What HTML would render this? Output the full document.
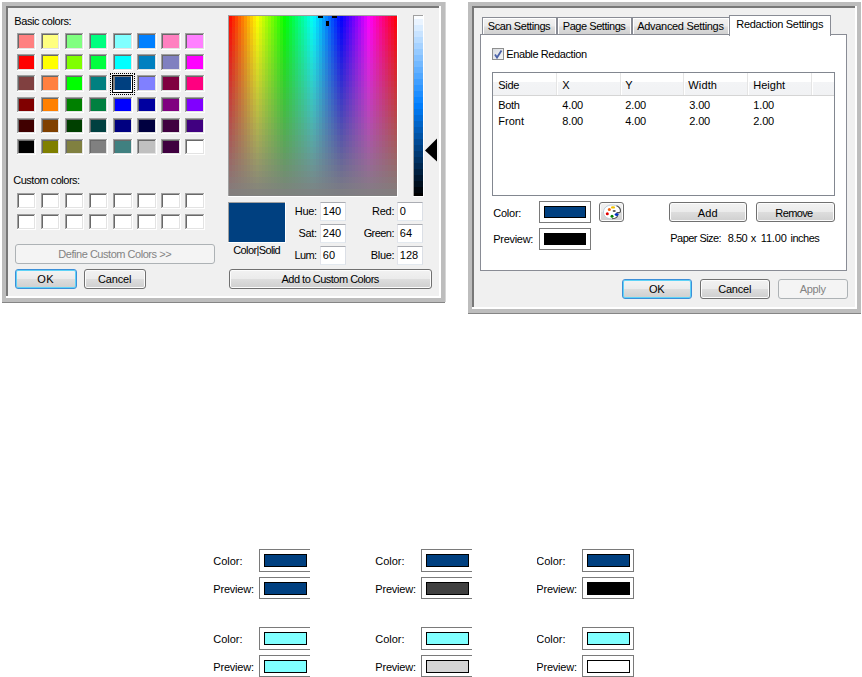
<!DOCTYPE html>
<html><head><meta charset="utf-8"><style>
html,body{margin:0;padding:0;background:#fff;}
body{width:862px;height:677px;position:relative;overflow:hidden;}
div,svg{position:absolute;}
.t{position:absolute;font-family:"Liberation Sans", sans-serif;font-size:11px;line-height:14px;white-space:pre;}
</style></head><body>
<div style='left:2px;top:2px;width:443px;height:301px;background:#bdbdbd'></div>
<div style='left:6px;top:6px;width:435px;height:292px;background:#ffffff'></div>
<div style='left:6px;top:6px;width:433px;height:290px;background:#787878'></div>
<div style='left:8px;top:8px;width:431px;height:288px;background:#f0f0f0'></div>
<div style='left:2px;top:302px;width:443px;height:1px;background:#858585'></div>
<div style='left:445px;top:2px;width:1px;height:300px;background:#d6d6d6'></div>
<div style='left:17px;top:33px;width:19px;height:17px;background:#ffffff'></div>
<div style='left:17px;top:33px;width:18px;height:16px;background:#e3e3e3'></div>
<div style='left:17px;top:33px;width:18px;height:16px;background:#a0a0a0;clip-path:polygon(0 0,100% 0,100% 1px,1px 1px,1px 100%,0 100%)'></div>
<div style='left:18px;top:34px;width:16px;height:14px;background:#696969'></div>
<div style='left:19px;top:35px;width:15px;height:13px;background:#FF8080'></div>
<div style='left:41px;top:33px;width:19px;height:17px;background:#ffffff'></div>
<div style='left:41px;top:33px;width:18px;height:16px;background:#e3e3e3'></div>
<div style='left:41px;top:33px;width:18px;height:16px;background:#a0a0a0;clip-path:polygon(0 0,100% 0,100% 1px,1px 1px,1px 100%,0 100%)'></div>
<div style='left:42px;top:34px;width:16px;height:14px;background:#696969'></div>
<div style='left:43px;top:35px;width:15px;height:13px;background:#FFFF80'></div>
<div style='left:65px;top:33px;width:19px;height:17px;background:#ffffff'></div>
<div style='left:65px;top:33px;width:18px;height:16px;background:#e3e3e3'></div>
<div style='left:65px;top:33px;width:18px;height:16px;background:#a0a0a0;clip-path:polygon(0 0,100% 0,100% 1px,1px 1px,1px 100%,0 100%)'></div>
<div style='left:66px;top:34px;width:16px;height:14px;background:#696969'></div>
<div style='left:67px;top:35px;width:15px;height:13px;background:#80FF80'></div>
<div style='left:89px;top:33px;width:19px;height:17px;background:#ffffff'></div>
<div style='left:89px;top:33px;width:18px;height:16px;background:#e3e3e3'></div>
<div style='left:89px;top:33px;width:18px;height:16px;background:#a0a0a0;clip-path:polygon(0 0,100% 0,100% 1px,1px 1px,1px 100%,0 100%)'></div>
<div style='left:90px;top:34px;width:16px;height:14px;background:#696969'></div>
<div style='left:91px;top:35px;width:15px;height:13px;background:#00FF80'></div>
<div style='left:113px;top:33px;width:20px;height:17px;background:#ffffff'></div>
<div style='left:113px;top:33px;width:19px;height:16px;background:#e3e3e3'></div>
<div style='left:113px;top:33px;width:19px;height:16px;background:#a0a0a0;clip-path:polygon(0 0,100% 0,100% 1px,1px 1px,1px 100%,0 100%)'></div>
<div style='left:114px;top:34px;width:17px;height:14px;background:#696969'></div>
<div style='left:115px;top:35px;width:16px;height:13px;background:#80FFFF'></div>
<div style='left:137px;top:33px;width:20px;height:17px;background:#ffffff'></div>
<div style='left:137px;top:33px;width:19px;height:16px;background:#e3e3e3'></div>
<div style='left:137px;top:33px;width:19px;height:16px;background:#a0a0a0;clip-path:polygon(0 0,100% 0,100% 1px,1px 1px,1px 100%,0 100%)'></div>
<div style='left:138px;top:34px;width:17px;height:14px;background:#696969'></div>
<div style='left:139px;top:35px;width:16px;height:13px;background:#0080FF'></div>
<div style='left:161px;top:33px;width:20px;height:17px;background:#ffffff'></div>
<div style='left:161px;top:33px;width:19px;height:16px;background:#e3e3e3'></div>
<div style='left:161px;top:33px;width:19px;height:16px;background:#a0a0a0;clip-path:polygon(0 0,100% 0,100% 1px,1px 1px,1px 100%,0 100%)'></div>
<div style='left:162px;top:34px;width:17px;height:14px;background:#696969'></div>
<div style='left:163px;top:35px;width:16px;height:13px;background:#FF80C0'></div>
<div style='left:185px;top:33px;width:20px;height:17px;background:#ffffff'></div>
<div style='left:185px;top:33px;width:19px;height:16px;background:#e3e3e3'></div>
<div style='left:185px;top:33px;width:19px;height:16px;background:#a0a0a0;clip-path:polygon(0 0,100% 0,100% 1px,1px 1px,1px 100%,0 100%)'></div>
<div style='left:186px;top:34px;width:17px;height:14px;background:#696969'></div>
<div style='left:187px;top:35px;width:16px;height:13px;background:#FF80FF'></div>
<div style='left:17px;top:54px;width:19px;height:17px;background:#ffffff'></div>
<div style='left:17px;top:54px;width:18px;height:16px;background:#e3e3e3'></div>
<div style='left:17px;top:54px;width:18px;height:16px;background:#a0a0a0;clip-path:polygon(0 0,100% 0,100% 1px,1px 1px,1px 100%,0 100%)'></div>
<div style='left:18px;top:55px;width:16px;height:14px;background:#696969'></div>
<div style='left:19px;top:56px;width:15px;height:13px;background:#FF0000'></div>
<div style='left:41px;top:54px;width:19px;height:17px;background:#ffffff'></div>
<div style='left:41px;top:54px;width:18px;height:16px;background:#e3e3e3'></div>
<div style='left:41px;top:54px;width:18px;height:16px;background:#a0a0a0;clip-path:polygon(0 0,100% 0,100% 1px,1px 1px,1px 100%,0 100%)'></div>
<div style='left:42px;top:55px;width:16px;height:14px;background:#696969'></div>
<div style='left:43px;top:56px;width:15px;height:13px;background:#FFFF00'></div>
<div style='left:65px;top:54px;width:19px;height:17px;background:#ffffff'></div>
<div style='left:65px;top:54px;width:18px;height:16px;background:#e3e3e3'></div>
<div style='left:65px;top:54px;width:18px;height:16px;background:#a0a0a0;clip-path:polygon(0 0,100% 0,100% 1px,1px 1px,1px 100%,0 100%)'></div>
<div style='left:66px;top:55px;width:16px;height:14px;background:#696969'></div>
<div style='left:67px;top:56px;width:15px;height:13px;background:#80FF00'></div>
<div style='left:89px;top:54px;width:19px;height:17px;background:#ffffff'></div>
<div style='left:89px;top:54px;width:18px;height:16px;background:#e3e3e3'></div>
<div style='left:89px;top:54px;width:18px;height:16px;background:#a0a0a0;clip-path:polygon(0 0,100% 0,100% 1px,1px 1px,1px 100%,0 100%)'></div>
<div style='left:90px;top:55px;width:16px;height:14px;background:#696969'></div>
<div style='left:91px;top:56px;width:15px;height:13px;background:#00FF40'></div>
<div style='left:113px;top:54px;width:20px;height:17px;background:#ffffff'></div>
<div style='left:113px;top:54px;width:19px;height:16px;background:#e3e3e3'></div>
<div style='left:113px;top:54px;width:19px;height:16px;background:#a0a0a0;clip-path:polygon(0 0,100% 0,100% 1px,1px 1px,1px 100%,0 100%)'></div>
<div style='left:114px;top:55px;width:17px;height:14px;background:#696969'></div>
<div style='left:115px;top:56px;width:16px;height:13px;background:#00FFFF'></div>
<div style='left:137px;top:54px;width:20px;height:17px;background:#ffffff'></div>
<div style='left:137px;top:54px;width:19px;height:16px;background:#e3e3e3'></div>
<div style='left:137px;top:54px;width:19px;height:16px;background:#a0a0a0;clip-path:polygon(0 0,100% 0,100% 1px,1px 1px,1px 100%,0 100%)'></div>
<div style='left:138px;top:55px;width:17px;height:14px;background:#696969'></div>
<div style='left:139px;top:56px;width:16px;height:13px;background:#0080C0'></div>
<div style='left:161px;top:54px;width:20px;height:17px;background:#ffffff'></div>
<div style='left:161px;top:54px;width:19px;height:16px;background:#e3e3e3'></div>
<div style='left:161px;top:54px;width:19px;height:16px;background:#a0a0a0;clip-path:polygon(0 0,100% 0,100% 1px,1px 1px,1px 100%,0 100%)'></div>
<div style='left:162px;top:55px;width:17px;height:14px;background:#696969'></div>
<div style='left:163px;top:56px;width:16px;height:13px;background:#8080C0'></div>
<div style='left:185px;top:54px;width:20px;height:17px;background:#ffffff'></div>
<div style='left:185px;top:54px;width:19px;height:16px;background:#e3e3e3'></div>
<div style='left:185px;top:54px;width:19px;height:16px;background:#a0a0a0;clip-path:polygon(0 0,100% 0,100% 1px,1px 1px,1px 100%,0 100%)'></div>
<div style='left:186px;top:55px;width:17px;height:14px;background:#696969'></div>
<div style='left:187px;top:56px;width:16px;height:13px;background:#FF00FF'></div>
<div style='left:17px;top:75px;width:19px;height:17px;background:#ffffff'></div>
<div style='left:17px;top:75px;width:18px;height:16px;background:#e3e3e3'></div>
<div style='left:17px;top:75px;width:18px;height:16px;background:#a0a0a0;clip-path:polygon(0 0,100% 0,100% 1px,1px 1px,1px 100%,0 100%)'></div>
<div style='left:18px;top:76px;width:16px;height:14px;background:#696969'></div>
<div style='left:19px;top:77px;width:15px;height:13px;background:#804040'></div>
<div style='left:41px;top:75px;width:19px;height:17px;background:#ffffff'></div>
<div style='left:41px;top:75px;width:18px;height:16px;background:#e3e3e3'></div>
<div style='left:41px;top:75px;width:18px;height:16px;background:#a0a0a0;clip-path:polygon(0 0,100% 0,100% 1px,1px 1px,1px 100%,0 100%)'></div>
<div style='left:42px;top:76px;width:16px;height:14px;background:#696969'></div>
<div style='left:43px;top:77px;width:15px;height:13px;background:#FF8040'></div>
<div style='left:65px;top:75px;width:19px;height:17px;background:#ffffff'></div>
<div style='left:65px;top:75px;width:18px;height:16px;background:#e3e3e3'></div>
<div style='left:65px;top:75px;width:18px;height:16px;background:#a0a0a0;clip-path:polygon(0 0,100% 0,100% 1px,1px 1px,1px 100%,0 100%)'></div>
<div style='left:66px;top:76px;width:16px;height:14px;background:#696969'></div>
<div style='left:67px;top:77px;width:15px;height:13px;background:#00FF00'></div>
<div style='left:89px;top:75px;width:19px;height:17px;background:#ffffff'></div>
<div style='left:89px;top:75px;width:18px;height:16px;background:#e3e3e3'></div>
<div style='left:89px;top:75px;width:18px;height:16px;background:#a0a0a0;clip-path:polygon(0 0,100% 0,100% 1px,1px 1px,1px 100%,0 100%)'></div>
<div style='left:90px;top:76px;width:16px;height:14px;background:#696969'></div>
<div style='left:91px;top:77px;width:15px;height:13px;background:#008080'></div>
<div style='left:112px;top:75px;width:21px;height:18px;background:#000'></div>
<div style='left:113px;top:76px;width:19px;height:16px;background:#ffffff'></div>
<div style='left:113px;top:76px;width:18px;height:14px;background:#808080'></div>
<div style='left:115px;top:77px;width:16px;height:13px;background:#004080'></div>
<div style='left:110px;top:73px;width:25px;height:22px;border:1px dotted #000;box-sizing:border-box'></div>
<div style='left:137px;top:75px;width:20px;height:17px;background:#ffffff'></div>
<div style='left:137px;top:75px;width:19px;height:16px;background:#e3e3e3'></div>
<div style='left:137px;top:75px;width:19px;height:16px;background:#a0a0a0;clip-path:polygon(0 0,100% 0,100% 1px,1px 1px,1px 100%,0 100%)'></div>
<div style='left:138px;top:76px;width:17px;height:14px;background:#696969'></div>
<div style='left:139px;top:77px;width:16px;height:13px;background:#8080FF'></div>
<div style='left:161px;top:75px;width:20px;height:17px;background:#ffffff'></div>
<div style='left:161px;top:75px;width:19px;height:16px;background:#e3e3e3'></div>
<div style='left:161px;top:75px;width:19px;height:16px;background:#a0a0a0;clip-path:polygon(0 0,100% 0,100% 1px,1px 1px,1px 100%,0 100%)'></div>
<div style='left:162px;top:76px;width:17px;height:14px;background:#696969'></div>
<div style='left:163px;top:77px;width:16px;height:13px;background:#800040'></div>
<div style='left:185px;top:75px;width:20px;height:17px;background:#ffffff'></div>
<div style='left:185px;top:75px;width:19px;height:16px;background:#e3e3e3'></div>
<div style='left:185px;top:75px;width:19px;height:16px;background:#a0a0a0;clip-path:polygon(0 0,100% 0,100% 1px,1px 1px,1px 100%,0 100%)'></div>
<div style='left:186px;top:76px;width:17px;height:14px;background:#696969'></div>
<div style='left:187px;top:77px;width:16px;height:13px;background:#FF0080'></div>
<div style='left:17px;top:97px;width:19px;height:16px;background:#ffffff'></div>
<div style='left:17px;top:97px;width:18px;height:15px;background:#e3e3e3'></div>
<div style='left:17px;top:97px;width:18px;height:15px;background:#a0a0a0;clip-path:polygon(0 0,100% 0,100% 1px,1px 1px,1px 100%,0 100%)'></div>
<div style='left:18px;top:98px;width:16px;height:13px;background:#696969'></div>
<div style='left:19px;top:99px;width:15px;height:12px;background:#800000'></div>
<div style='left:41px;top:97px;width:19px;height:16px;background:#ffffff'></div>
<div style='left:41px;top:97px;width:18px;height:15px;background:#e3e3e3'></div>
<div style='left:41px;top:97px;width:18px;height:15px;background:#a0a0a0;clip-path:polygon(0 0,100% 0,100% 1px,1px 1px,1px 100%,0 100%)'></div>
<div style='left:42px;top:98px;width:16px;height:13px;background:#696969'></div>
<div style='left:43px;top:99px;width:15px;height:12px;background:#FF8000'></div>
<div style='left:65px;top:97px;width:19px;height:16px;background:#ffffff'></div>
<div style='left:65px;top:97px;width:18px;height:15px;background:#e3e3e3'></div>
<div style='left:65px;top:97px;width:18px;height:15px;background:#a0a0a0;clip-path:polygon(0 0,100% 0,100% 1px,1px 1px,1px 100%,0 100%)'></div>
<div style='left:66px;top:98px;width:16px;height:13px;background:#696969'></div>
<div style='left:67px;top:99px;width:15px;height:12px;background:#008000'></div>
<div style='left:89px;top:97px;width:19px;height:16px;background:#ffffff'></div>
<div style='left:89px;top:97px;width:18px;height:15px;background:#e3e3e3'></div>
<div style='left:89px;top:97px;width:18px;height:15px;background:#a0a0a0;clip-path:polygon(0 0,100% 0,100% 1px,1px 1px,1px 100%,0 100%)'></div>
<div style='left:90px;top:98px;width:16px;height:13px;background:#696969'></div>
<div style='left:91px;top:99px;width:15px;height:12px;background:#008040'></div>
<div style='left:113px;top:97px;width:20px;height:16px;background:#ffffff'></div>
<div style='left:113px;top:97px;width:19px;height:15px;background:#e3e3e3'></div>
<div style='left:113px;top:97px;width:19px;height:15px;background:#a0a0a0;clip-path:polygon(0 0,100% 0,100% 1px,1px 1px,1px 100%,0 100%)'></div>
<div style='left:114px;top:98px;width:17px;height:13px;background:#696969'></div>
<div style='left:115px;top:99px;width:16px;height:12px;background:#0000FF'></div>
<div style='left:137px;top:97px;width:20px;height:16px;background:#ffffff'></div>
<div style='left:137px;top:97px;width:19px;height:15px;background:#e3e3e3'></div>
<div style='left:137px;top:97px;width:19px;height:15px;background:#a0a0a0;clip-path:polygon(0 0,100% 0,100% 1px,1px 1px,1px 100%,0 100%)'></div>
<div style='left:138px;top:98px;width:17px;height:13px;background:#696969'></div>
<div style='left:139px;top:99px;width:16px;height:12px;background:#0000A0'></div>
<div style='left:161px;top:97px;width:20px;height:16px;background:#ffffff'></div>
<div style='left:161px;top:97px;width:19px;height:15px;background:#e3e3e3'></div>
<div style='left:161px;top:97px;width:19px;height:15px;background:#a0a0a0;clip-path:polygon(0 0,100% 0,100% 1px,1px 1px,1px 100%,0 100%)'></div>
<div style='left:162px;top:98px;width:17px;height:13px;background:#696969'></div>
<div style='left:163px;top:99px;width:16px;height:12px;background:#800080'></div>
<div style='left:185px;top:97px;width:20px;height:16px;background:#ffffff'></div>
<div style='left:185px;top:97px;width:19px;height:15px;background:#e3e3e3'></div>
<div style='left:185px;top:97px;width:19px;height:15px;background:#a0a0a0;clip-path:polygon(0 0,100% 0,100% 1px,1px 1px,1px 100%,0 100%)'></div>
<div style='left:186px;top:98px;width:17px;height:13px;background:#696969'></div>
<div style='left:187px;top:99px;width:16px;height:12px;background:#8000FF'></div>
<div style='left:17px;top:118px;width:19px;height:16px;background:#ffffff'></div>
<div style='left:17px;top:118px;width:18px;height:15px;background:#e3e3e3'></div>
<div style='left:17px;top:118px;width:18px;height:15px;background:#a0a0a0;clip-path:polygon(0 0,100% 0,100% 1px,1px 1px,1px 100%,0 100%)'></div>
<div style='left:18px;top:119px;width:16px;height:13px;background:#696969'></div>
<div style='left:19px;top:120px;width:15px;height:12px;background:#400000'></div>
<div style='left:41px;top:118px;width:19px;height:16px;background:#ffffff'></div>
<div style='left:41px;top:118px;width:18px;height:15px;background:#e3e3e3'></div>
<div style='left:41px;top:118px;width:18px;height:15px;background:#a0a0a0;clip-path:polygon(0 0,100% 0,100% 1px,1px 1px,1px 100%,0 100%)'></div>
<div style='left:42px;top:119px;width:16px;height:13px;background:#696969'></div>
<div style='left:43px;top:120px;width:15px;height:12px;background:#804000'></div>
<div style='left:65px;top:118px;width:19px;height:16px;background:#ffffff'></div>
<div style='left:65px;top:118px;width:18px;height:15px;background:#e3e3e3'></div>
<div style='left:65px;top:118px;width:18px;height:15px;background:#a0a0a0;clip-path:polygon(0 0,100% 0,100% 1px,1px 1px,1px 100%,0 100%)'></div>
<div style='left:66px;top:119px;width:16px;height:13px;background:#696969'></div>
<div style='left:67px;top:120px;width:15px;height:12px;background:#004000'></div>
<div style='left:89px;top:118px;width:19px;height:16px;background:#ffffff'></div>
<div style='left:89px;top:118px;width:18px;height:15px;background:#e3e3e3'></div>
<div style='left:89px;top:118px;width:18px;height:15px;background:#a0a0a0;clip-path:polygon(0 0,100% 0,100% 1px,1px 1px,1px 100%,0 100%)'></div>
<div style='left:90px;top:119px;width:16px;height:13px;background:#696969'></div>
<div style='left:91px;top:120px;width:15px;height:12px;background:#004040'></div>
<div style='left:113px;top:118px;width:20px;height:16px;background:#ffffff'></div>
<div style='left:113px;top:118px;width:19px;height:15px;background:#e3e3e3'></div>
<div style='left:113px;top:118px;width:19px;height:15px;background:#a0a0a0;clip-path:polygon(0 0,100% 0,100% 1px,1px 1px,1px 100%,0 100%)'></div>
<div style='left:114px;top:119px;width:17px;height:13px;background:#696969'></div>
<div style='left:115px;top:120px;width:16px;height:12px;background:#000080'></div>
<div style='left:137px;top:118px;width:20px;height:16px;background:#ffffff'></div>
<div style='left:137px;top:118px;width:19px;height:15px;background:#e3e3e3'></div>
<div style='left:137px;top:118px;width:19px;height:15px;background:#a0a0a0;clip-path:polygon(0 0,100% 0,100% 1px,1px 1px,1px 100%,0 100%)'></div>
<div style='left:138px;top:119px;width:17px;height:13px;background:#696969'></div>
<div style='left:139px;top:120px;width:16px;height:12px;background:#000040'></div>
<div style='left:161px;top:118px;width:20px;height:16px;background:#ffffff'></div>
<div style='left:161px;top:118px;width:19px;height:15px;background:#e3e3e3'></div>
<div style='left:161px;top:118px;width:19px;height:15px;background:#a0a0a0;clip-path:polygon(0 0,100% 0,100% 1px,1px 1px,1px 100%,0 100%)'></div>
<div style='left:162px;top:119px;width:17px;height:13px;background:#696969'></div>
<div style='left:163px;top:120px;width:16px;height:12px;background:#400040'></div>
<div style='left:185px;top:118px;width:20px;height:16px;background:#ffffff'></div>
<div style='left:185px;top:118px;width:19px;height:15px;background:#e3e3e3'></div>
<div style='left:185px;top:118px;width:19px;height:15px;background:#a0a0a0;clip-path:polygon(0 0,100% 0,100% 1px,1px 1px,1px 100%,0 100%)'></div>
<div style='left:186px;top:119px;width:17px;height:13px;background:#696969'></div>
<div style='left:187px;top:120px;width:16px;height:12px;background:#400080'></div>
<div style='left:17px;top:139px;width:19px;height:16px;background:#ffffff'></div>
<div style='left:17px;top:139px;width:18px;height:15px;background:#e3e3e3'></div>
<div style='left:17px;top:139px;width:18px;height:15px;background:#a0a0a0;clip-path:polygon(0 0,100% 0,100% 1px,1px 1px,1px 100%,0 100%)'></div>
<div style='left:18px;top:140px;width:16px;height:13px;background:#696969'></div>
<div style='left:19px;top:141px;width:15px;height:12px;background:#000000'></div>
<div style='left:41px;top:139px;width:19px;height:16px;background:#ffffff'></div>
<div style='left:41px;top:139px;width:18px;height:15px;background:#e3e3e3'></div>
<div style='left:41px;top:139px;width:18px;height:15px;background:#a0a0a0;clip-path:polygon(0 0,100% 0,100% 1px,1px 1px,1px 100%,0 100%)'></div>
<div style='left:42px;top:140px;width:16px;height:13px;background:#696969'></div>
<div style='left:43px;top:141px;width:15px;height:12px;background:#808000'></div>
<div style='left:65px;top:139px;width:19px;height:16px;background:#ffffff'></div>
<div style='left:65px;top:139px;width:18px;height:15px;background:#e3e3e3'></div>
<div style='left:65px;top:139px;width:18px;height:15px;background:#a0a0a0;clip-path:polygon(0 0,100% 0,100% 1px,1px 1px,1px 100%,0 100%)'></div>
<div style='left:66px;top:140px;width:16px;height:13px;background:#696969'></div>
<div style='left:67px;top:141px;width:15px;height:12px;background:#808040'></div>
<div style='left:89px;top:139px;width:19px;height:16px;background:#ffffff'></div>
<div style='left:89px;top:139px;width:18px;height:15px;background:#e3e3e3'></div>
<div style='left:89px;top:139px;width:18px;height:15px;background:#a0a0a0;clip-path:polygon(0 0,100% 0,100% 1px,1px 1px,1px 100%,0 100%)'></div>
<div style='left:90px;top:140px;width:16px;height:13px;background:#696969'></div>
<div style='left:91px;top:141px;width:15px;height:12px;background:#808080'></div>
<div style='left:113px;top:139px;width:20px;height:16px;background:#ffffff'></div>
<div style='left:113px;top:139px;width:19px;height:15px;background:#e3e3e3'></div>
<div style='left:113px;top:139px;width:19px;height:15px;background:#a0a0a0;clip-path:polygon(0 0,100% 0,100% 1px,1px 1px,1px 100%,0 100%)'></div>
<div style='left:114px;top:140px;width:17px;height:13px;background:#696969'></div>
<div style='left:115px;top:141px;width:16px;height:12px;background:#408080'></div>
<div style='left:137px;top:139px;width:20px;height:16px;background:#ffffff'></div>
<div style='left:137px;top:139px;width:19px;height:15px;background:#e3e3e3'></div>
<div style='left:137px;top:139px;width:19px;height:15px;background:#a0a0a0;clip-path:polygon(0 0,100% 0,100% 1px,1px 1px,1px 100%,0 100%)'></div>
<div style='left:138px;top:140px;width:17px;height:13px;background:#696969'></div>
<div style='left:139px;top:141px;width:16px;height:12px;background:#C0C0C0'></div>
<div style='left:161px;top:139px;width:20px;height:16px;background:#ffffff'></div>
<div style='left:161px;top:139px;width:19px;height:15px;background:#e3e3e3'></div>
<div style='left:161px;top:139px;width:19px;height:15px;background:#a0a0a0;clip-path:polygon(0 0,100% 0,100% 1px,1px 1px,1px 100%,0 100%)'></div>
<div style='left:162px;top:140px;width:17px;height:13px;background:#696969'></div>
<div style='left:163px;top:141px;width:16px;height:12px;background:#400040'></div>
<div style='left:185px;top:139px;width:20px;height:16px;background:#ffffff'></div>
<div style='left:185px;top:139px;width:19px;height:15px;background:#e3e3e3'></div>
<div style='left:185px;top:139px;width:19px;height:15px;background:#a0a0a0;clip-path:polygon(0 0,100% 0,100% 1px,1px 1px,1px 100%,0 100%)'></div>
<div style='left:186px;top:140px;width:17px;height:13px;background:#696969'></div>
<div style='left:187px;top:141px;width:16px;height:12px;background:#FFFFFF'></div>
<div style='left:17px;top:193px;width:19px;height:16px;background:#ffffff'></div>
<div style='left:17px;top:193px;width:18px;height:15px;background:#e3e3e3'></div>
<div style='left:17px;top:193px;width:18px;height:15px;background:#a0a0a0;clip-path:polygon(0 0,100% 0,100% 1px,1px 1px,1px 100%,0 100%)'></div>
<div style='left:18px;top:194px;width:16px;height:13px;background:#696969'></div>
<div style='left:19px;top:195px;width:15px;height:12px;background:#ffffff'></div>
<div style='left:41px;top:193px;width:19px;height:16px;background:#ffffff'></div>
<div style='left:41px;top:193px;width:18px;height:15px;background:#e3e3e3'></div>
<div style='left:41px;top:193px;width:18px;height:15px;background:#a0a0a0;clip-path:polygon(0 0,100% 0,100% 1px,1px 1px,1px 100%,0 100%)'></div>
<div style='left:42px;top:194px;width:16px;height:13px;background:#696969'></div>
<div style='left:43px;top:195px;width:15px;height:12px;background:#ffffff'></div>
<div style='left:65px;top:193px;width:19px;height:16px;background:#ffffff'></div>
<div style='left:65px;top:193px;width:18px;height:15px;background:#e3e3e3'></div>
<div style='left:65px;top:193px;width:18px;height:15px;background:#a0a0a0;clip-path:polygon(0 0,100% 0,100% 1px,1px 1px,1px 100%,0 100%)'></div>
<div style='left:66px;top:194px;width:16px;height:13px;background:#696969'></div>
<div style='left:67px;top:195px;width:15px;height:12px;background:#ffffff'></div>
<div style='left:89px;top:193px;width:19px;height:16px;background:#ffffff'></div>
<div style='left:89px;top:193px;width:18px;height:15px;background:#e3e3e3'></div>
<div style='left:89px;top:193px;width:18px;height:15px;background:#a0a0a0;clip-path:polygon(0 0,100% 0,100% 1px,1px 1px,1px 100%,0 100%)'></div>
<div style='left:90px;top:194px;width:16px;height:13px;background:#696969'></div>
<div style='left:91px;top:195px;width:15px;height:12px;background:#ffffff'></div>
<div style='left:113px;top:193px;width:20px;height:16px;background:#ffffff'></div>
<div style='left:113px;top:193px;width:19px;height:15px;background:#e3e3e3'></div>
<div style='left:113px;top:193px;width:19px;height:15px;background:#a0a0a0;clip-path:polygon(0 0,100% 0,100% 1px,1px 1px,1px 100%,0 100%)'></div>
<div style='left:114px;top:194px;width:17px;height:13px;background:#696969'></div>
<div style='left:115px;top:195px;width:16px;height:12px;background:#ffffff'></div>
<div style='left:137px;top:193px;width:20px;height:16px;background:#ffffff'></div>
<div style='left:137px;top:193px;width:19px;height:15px;background:#e3e3e3'></div>
<div style='left:137px;top:193px;width:19px;height:15px;background:#a0a0a0;clip-path:polygon(0 0,100% 0,100% 1px,1px 1px,1px 100%,0 100%)'></div>
<div style='left:138px;top:194px;width:17px;height:13px;background:#696969'></div>
<div style='left:139px;top:195px;width:16px;height:12px;background:#ffffff'></div>
<div style='left:161px;top:193px;width:20px;height:16px;background:#ffffff'></div>
<div style='left:161px;top:193px;width:19px;height:15px;background:#e3e3e3'></div>
<div style='left:161px;top:193px;width:19px;height:15px;background:#a0a0a0;clip-path:polygon(0 0,100% 0,100% 1px,1px 1px,1px 100%,0 100%)'></div>
<div style='left:162px;top:194px;width:17px;height:13px;background:#696969'></div>
<div style='left:163px;top:195px;width:16px;height:12px;background:#ffffff'></div>
<div style='left:185px;top:193px;width:20px;height:16px;background:#ffffff'></div>
<div style='left:185px;top:193px;width:19px;height:15px;background:#e3e3e3'></div>
<div style='left:185px;top:193px;width:19px;height:15px;background:#a0a0a0;clip-path:polygon(0 0,100% 0,100% 1px,1px 1px,1px 100%,0 100%)'></div>
<div style='left:186px;top:194px;width:17px;height:13px;background:#696969'></div>
<div style='left:187px;top:195px;width:16px;height:12px;background:#ffffff'></div>
<div style='left:17px;top:214px;width:19px;height:16px;background:#ffffff'></div>
<div style='left:17px;top:214px;width:18px;height:15px;background:#e3e3e3'></div>
<div style='left:17px;top:214px;width:18px;height:15px;background:#a0a0a0;clip-path:polygon(0 0,100% 0,100% 1px,1px 1px,1px 100%,0 100%)'></div>
<div style='left:18px;top:215px;width:16px;height:13px;background:#696969'></div>
<div style='left:19px;top:216px;width:15px;height:12px;background:#ffffff'></div>
<div style='left:41px;top:214px;width:19px;height:16px;background:#ffffff'></div>
<div style='left:41px;top:214px;width:18px;height:15px;background:#e3e3e3'></div>
<div style='left:41px;top:214px;width:18px;height:15px;background:#a0a0a0;clip-path:polygon(0 0,100% 0,100% 1px,1px 1px,1px 100%,0 100%)'></div>
<div style='left:42px;top:215px;width:16px;height:13px;background:#696969'></div>
<div style='left:43px;top:216px;width:15px;height:12px;background:#ffffff'></div>
<div style='left:65px;top:214px;width:19px;height:16px;background:#ffffff'></div>
<div style='left:65px;top:214px;width:18px;height:15px;background:#e3e3e3'></div>
<div style='left:65px;top:214px;width:18px;height:15px;background:#a0a0a0;clip-path:polygon(0 0,100% 0,100% 1px,1px 1px,1px 100%,0 100%)'></div>
<div style='left:66px;top:215px;width:16px;height:13px;background:#696969'></div>
<div style='left:67px;top:216px;width:15px;height:12px;background:#ffffff'></div>
<div style='left:89px;top:214px;width:19px;height:16px;background:#ffffff'></div>
<div style='left:89px;top:214px;width:18px;height:15px;background:#e3e3e3'></div>
<div style='left:89px;top:214px;width:18px;height:15px;background:#a0a0a0;clip-path:polygon(0 0,100% 0,100% 1px,1px 1px,1px 100%,0 100%)'></div>
<div style='left:90px;top:215px;width:16px;height:13px;background:#696969'></div>
<div style='left:91px;top:216px;width:15px;height:12px;background:#ffffff'></div>
<div style='left:113px;top:214px;width:20px;height:16px;background:#ffffff'></div>
<div style='left:113px;top:214px;width:19px;height:15px;background:#e3e3e3'></div>
<div style='left:113px;top:214px;width:19px;height:15px;background:#a0a0a0;clip-path:polygon(0 0,100% 0,100% 1px,1px 1px,1px 100%,0 100%)'></div>
<div style='left:114px;top:215px;width:17px;height:13px;background:#696969'></div>
<div style='left:115px;top:216px;width:16px;height:12px;background:#ffffff'></div>
<div style='left:137px;top:214px;width:20px;height:16px;background:#ffffff'></div>
<div style='left:137px;top:214px;width:19px;height:15px;background:#e3e3e3'></div>
<div style='left:137px;top:214px;width:19px;height:15px;background:#a0a0a0;clip-path:polygon(0 0,100% 0,100% 1px,1px 1px,1px 100%,0 100%)'></div>
<div style='left:138px;top:215px;width:17px;height:13px;background:#696969'></div>
<div style='left:139px;top:216px;width:16px;height:12px;background:#ffffff'></div>
<div style='left:161px;top:214px;width:20px;height:16px;background:#ffffff'></div>
<div style='left:161px;top:214px;width:19px;height:15px;background:#e3e3e3'></div>
<div style='left:161px;top:214px;width:19px;height:15px;background:#a0a0a0;clip-path:polygon(0 0,100% 0,100% 1px,1px 1px,1px 100%,0 100%)'></div>
<div style='left:162px;top:215px;width:17px;height:13px;background:#696969'></div>
<div style='left:163px;top:216px;width:16px;height:12px;background:#ffffff'></div>
<div style='left:185px;top:214px;width:20px;height:16px;background:#ffffff'></div>
<div style='left:185px;top:214px;width:19px;height:15px;background:#e3e3e3'></div>
<div style='left:185px;top:214px;width:19px;height:15px;background:#a0a0a0;clip-path:polygon(0 0,100% 0,100% 1px,1px 1px,1px 100%,0 100%)'></div>
<div style='left:186px;top:215px;width:17px;height:13px;background:#696969'></div>
<div style='left:187px;top:216px;width:16px;height:12px;background:#ffffff'></div>
<div style='left:15px;top:244px;width:200px;height:20px;border:1px solid #adb2b5;border-radius:3px;background:#f4f4f4;box-sizing:border-box'></div>
<div style='left:15px;top:269px;width:62px;height:20px;border:1px solid #3c8fd8;border-radius:3px;box-sizing:border-box;box-shadow:inset 0 0 0 1px #5fd3f7;background:linear-gradient(#eaf6fd 0%,#eaf6fd 0%,#f2f2f2 8%,#ebebeb 48%,#dddddd 52%,#cfcfcf 100%)'></div>
<div style='left:84px;top:269px;width:62px;height:20px;border:1px solid #707070;border-radius:3px;box-sizing:border-box;box-shadow:inset 0 0 0 1px #fcfcfc;background:linear-gradient(#f2f2f2 0%,#ebebeb 48%,#dddddd 52%,#cfcfcf 100%)'></div>
<div style='left:228px;top:15px;width:170px;height:182px;background:#fff'></div>
<div style='left:228px;top:15px;width:169px;height:181px;background:#a0a0a0'></div>
<div style='left:229px;top:16px;width:168px;height:180px;background:linear-gradient(to bottom,rgba(128,128,128,0.010) 0.0px,rgba(128,128,128,0.010) 5.0px,rgba(128,128,128,0.043) 5.0px,rgba(128,128,128,0.043) 11.0px,rgba(128,128,128,0.077) 11.0px,rgba(128,128,128,0.077) 17.0px,rgba(128,128,128,0.110) 17.0px,rgba(128,128,128,0.110) 23.0px,rgba(128,128,128,0.143) 23.0px,rgba(128,128,128,0.143) 29.0px,rgba(128,128,128,0.177) 29.0px,rgba(128,128,128,0.177) 35.0px,rgba(128,128,128,0.210) 35.0px,rgba(128,128,128,0.210) 41.0px,rgba(128,128,128,0.243) 41.0px,rgba(128,128,128,0.243) 47.0px,rgba(128,128,128,0.277) 47.0px,rgba(128,128,128,0.277) 53.0px,rgba(128,128,128,0.310) 53.0px,rgba(128,128,128,0.310) 59.0px,rgba(128,128,128,0.343) 59.0px,rgba(128,128,128,0.343) 65.0px,rgba(128,128,128,0.377) 65.0px,rgba(128,128,128,0.377) 71.0px,rgba(128,128,128,0.410) 71.0px,rgba(128,128,128,0.410) 77.0px,rgba(128,128,128,0.443) 77.0px,rgba(128,128,128,0.443) 83.0px,rgba(128,128,128,0.477) 83.0px,rgba(128,128,128,0.477) 89.0px,rgba(128,128,128,0.510) 89.0px,rgba(128,128,128,0.510) 95.0px,rgba(128,128,128,0.543) 95.0px,rgba(128,128,128,0.543) 101.0px,rgba(128,128,128,0.577) 101.0px,rgba(128,128,128,0.577) 107.0px,rgba(128,128,128,0.610) 107.0px,rgba(128,128,128,0.610) 113.0px,rgba(128,128,128,0.643) 113.0px,rgba(128,128,128,0.643) 119.0px,rgba(128,128,128,0.677) 119.0px,rgba(128,128,128,0.677) 125.0px,rgba(128,128,128,0.710) 125.0px,rgba(128,128,128,0.710) 131.0px,rgba(128,128,128,0.743) 131.0px,rgba(128,128,128,0.743) 137.0px,rgba(128,128,128,0.777) 137.0px,rgba(128,128,128,0.777) 143.0px,rgba(128,128,128,0.810) 143.0px,rgba(128,128,128,0.810) 149.0px,rgba(128,128,128,0.843) 149.0px,rgba(128,128,128,0.843) 155.0px,rgba(128,128,128,0.877) 155.0px,rgba(128,128,128,0.877) 161.0px,rgba(128,128,128,0.910) 161.0px,rgba(128,128,128,0.910) 167.0px,rgba(128,128,128,0.943) 167.0px,rgba(128,128,128,0.943) 173.0px,rgba(128,128,128,0.977) 173.0px,rgba(128,128,128,0.977) 179.0px,rgba(128,128,128,1.000) 179.0px,rgba(128,128,128,1.000) 180.0px),linear-gradient(to right,#ff0e00 0.00px,#ff0e00 3.00px,#ff2900 3.00px,#ff2900 6.00px,#ff4400 6.00px,#ff4400 9.00px,#ff6000 9.00px,#ff6000 12.00px,#ff7b00 12.00px,#ff7b00 15.00px,#ff9600 15.00px,#ff9600 18.00px,#ffb200 18.00px,#ffb200 21.00px,#ffcd00 21.00px,#ffcd00 24.00px,#ffe800 24.00px,#ffe800 27.00px,#faff00 27.00px,#faff00 30.00px,#dfff00 30.00px,#dfff00 33.00px,#c4ff00 33.00px,#c4ff00 36.00px,#a8ff00 36.00px,#a8ff00 39.00px,#8dff00 39.00px,#8dff00 42.00px,#72ff00 42.00px,#72ff00 45.00px,#57ff00 45.00px,#57ff00 48.00px,#3bff00 48.00px,#3bff00 51.00px,#20ff00 51.00px,#20ff00 54.00px,#05ff00 54.00px,#05ff00 57.00px,#00ff17 57.00px,#00ff17 60.00px,#00ff32 60.00px,#00ff32 63.00px,#00ff4d 63.00px,#00ff4d 66.00px,#00ff69 66.00px,#00ff69 69.00px,#00ff84 69.00px,#00ff84 72.00px,#00ff9f 72.00px,#00ff9f 75.00px,#00ffbb 75.00px,#00ffbb 78.00px,#00ffd6 78.00px,#00ffd6 81.00px,#00fff1 81.00px,#00fff1 84.00px,#00f1ff 84.00px,#00f1ff 87.00px,#00d6ff 87.00px,#00d6ff 90.00px,#00bbff 90.00px,#00bbff 93.00px,#009fff 93.00px,#009fff 96.00px,#0084ff 96.00px,#0084ff 99.00px,#0069ff 99.00px,#0069ff 102.00px,#004dff 102.00px,#004dff 105.00px,#0032ff 105.00px,#0032ff 108.00px,#0017ff 108.00px,#0017ff 111.00px,#0500ff 111.00px,#0500ff 114.00px,#2000ff 114.00px,#2000ff 117.00px,#3b00ff 117.00px,#3b00ff 120.00px,#5700ff 120.00px,#5700ff 123.00px,#7200ff 123.00px,#7200ff 126.00px,#8d00ff 126.00px,#8d00ff 129.00px,#a800ff 129.00px,#a800ff 132.00px,#c400ff 132.00px,#c400ff 135.00px,#df00ff 135.00px,#df00ff 138.00px,#fa00ff 138.00px,#fa00ff 141.00px,#ff00e8 141.00px,#ff00e8 144.00px,#ff00cd 144.00px,#ff00cd 147.00px,#ff00b2 147.00px,#ff00b2 150.00px,#ff0096 150.00px,#ff0096 153.00px,#ff007b 153.00px,#ff007b 156.00px,#ff0060 156.00px,#ff0060 159.00px,#ff0044 159.00px,#ff0044 162.00px,#ff0029 162.00px,#ff0029 165.00px,#ff000e 165.00px,#ff000e 168.00px)'></div>
<div style='left:318px;top:16px;width:5px;height:2px;background:#000'></div>
<div style='left:332px;top:16px;width:5px;height:2px;background:#000'></div>
<div style='left:326px;top:21px;width:3px;height:5px;background:#000'></div>
<div style='left:413px;top:15px;width:11px;height:182px;background:#fff'></div>
<div style='left:413px;top:15px;width:10px;height:181px;background:#a0a0a0'></div>
<div style='left:414px;top:16px;width:9px;height:180px;background:linear-gradient(to bottom,#fbfdff 0px,#fbfdff 3px,#eaf4ff 3px,#eaf4ff 9px,#d9ecff 9px,#d9ecff 15px,#c8e3ff 15px,#c8e3ff 21px,#b7dbff 21px,#b7dbff 27px,#a6d2ff 27px,#a6d2ff 33px,#95caff 33px,#95caff 39px,#84c1ff 39px,#84c1ff 45px,#73b9ff 45px,#73b9ff 51px,#62b0ff 51px,#62b0ff 57px,#51a8ff 57px,#51a8ff 63px,#409fff 63px,#409fff 69px,#2f97ff 69px,#2f97ff 75px,#1e8eff 75px,#1e8eff 81px,#0d86ff 81px,#0d86ff 87px,#007dfb 87px,#007dfb 93px,#0075ea 93px,#0075ea 99px,#006cd9 99px,#006cd9 105px,#0064c8 105px,#0064c8 111px,#005bb7 111px,#005bb7 117px,#0053a6 117px,#0053a6 123px,#004a95 123px,#004a95 129px,#004284 129px,#004284 135px,#003973 135px,#003973 141px,#003162 141px,#003162 147px,#002851 147px,#002851 153px,#002040 153px,#002040 159px,#00172f 159px,#00172f 165px,#000f1e 165px,#000f1e 171px,#00060d 171px,#00060d 177px,#000000 177px,#000000 180px)'></div>
<svg style='position:absolute;left:424px;top:138px' width='14' height='24'><polygon points='1,12.5 13,0.5 13,23.5' fill='#000'/></svg>
<div style='left:228px;top:202px;width:58px;height:41px;background:#fff'></div>
<div style='left:228px;top:202px;width:57px;height:40px;background:#a0a0a0'></div>
<div style='left:229px;top:203px;width:56px;height:39px;background:#004080'></div>
<div style='left:320px;top:202px;width:26px;height:19px;background:#fff;border:1px solid #e3e9ef;border-top-color:#abadb3;border-left-color:#e2e3ea;border-right-color:#dbdfe6;box-sizing:border-box'></div>
<div style='left:320px;top:224px;width:26px;height:19px;background:#fff;border:1px solid #e3e9ef;border-top-color:#abadb3;border-left-color:#e2e3ea;border-right-color:#dbdfe6;box-sizing:border-box'></div>
<div style='left:320px;top:246px;width:26px;height:19px;background:#fff;border:1px solid #e3e9ef;border-top-color:#abadb3;border-left-color:#e2e3ea;border-right-color:#dbdfe6;box-sizing:border-box'></div>
<div style='left:397px;top:202px;width:26px;height:19px;background:#fff;border:1px solid #e3e9ef;border-top-color:#abadb3;border-left-color:#e2e3ea;border-right-color:#dbdfe6;box-sizing:border-box'></div>
<div style='left:397px;top:224px;width:26px;height:19px;background:#fff;border:1px solid #e3e9ef;border-top-color:#abadb3;border-left-color:#e2e3ea;border-right-color:#dbdfe6;box-sizing:border-box'></div>
<div style='left:397px;top:246px;width:26px;height:19px;background:#fff;border:1px solid #e3e9ef;border-top-color:#abadb3;border-left-color:#e2e3ea;border-right-color:#dbdfe6;box-sizing:border-box'></div>
<div style='left:229px;top:269px;width:203px;height:20px;border:1px solid #707070;border-radius:3px;box-sizing:border-box;box-shadow:inset 0 0 0 1px #fcfcfc;background:linear-gradient(#f2f2f2 0%,#ebebeb 48%,#dddddd 52%,#cfcfcf 100%)'></div>
<div style='left:468px;top:2px;width:393px;height:312px;background:#bdbdbd'></div>
<div style='left:472px;top:6px;width:385px;height:303px;background:#ffffff'></div>
<div style='left:472px;top:6px;width:383px;height:301px;background:#787878'></div>
<div style='left:474px;top:8px;width:381px;height:299px;background:#f0f0f0'></div>
<div style='left:468px;top:313px;width:393px;height:1px;background:#858585'></div>
<div style='left:482px;top:17px;width:75px;height:18px;border:1px solid #898c95;border-bottom:none;box-sizing:border-box;box-shadow:inset 1px 1px 0 #fff, inset -1px 0 0 #fff;background:linear-gradient(#f2f2f2 0%,#ebebeb 45%,#dddddd 55%,#cfcfcf 100%)'></div>
<div style='left:557px;top:17px;width:75px;height:18px;border:1px solid #898c95;border-bottom:none;box-sizing:border-box;box-shadow:inset 1px 1px 0 #fff, inset -1px 0 0 #fff;background:linear-gradient(#f2f2f2 0%,#ebebeb 45%,#dddddd 55%,#cfcfcf 100%)'></div>
<div style='left:632px;top:17px;width:98px;height:18px;border:1px solid #898c95;border-bottom:none;box-sizing:border-box;box-shadow:inset 1px 1px 0 #fff, inset -1px 0 0 #fff;background:linear-gradient(#f2f2f2 0%,#ebebeb 45%,#dddddd 55%,#cfcfcf 100%)'></div>
<div style='left:480px;top:34px;width:367px;height:237px;background:#fff;border:1px solid #898c95;box-sizing:border-box'></div>
<div style='left:729px;top:15px;width:102px;height:21px;background:#fff;border:1px solid #898c95;border-bottom:none;box-sizing:border-box'></div>
<div style='left:492px;top:48px;width:12px;height:12px;border:1px solid #8e8f8f;box-sizing:border-box;background:linear-gradient(135deg,#d8dbe0,#f6f6f6)'></div>
<svg style='position:absolute;left:492px;top:48px' width='12' height='12'><path d='M3 6.5 L5 9.5 L9.5 2.5' stroke='#4b62a8' stroke-width='1.8' fill='none'/></svg>
<div style='left:492px;top:72px;width:343px;height:124px;background:#fff;border:1px solid #828790;box-sizing:border-box'></div>
<div style='left:493px;top:73px;width:341px;height:22px;background:linear-gradient(#ffffff 0%,#ffffff 40%,#f3f4f6 41%,#f1f2f4 100%)'></div>
<div style='left:493px;top:95px;width:341px;height:1px;background:#d5d5d5'></div>
<div style='left:556px;top:73px;width:1px;height:22px;background:#e5e5e5'></div>
<div style='left:557px;top:73px;width:1px;height:22px;background:#ffffff'></div>
<div style='left:620px;top:73px;width:1px;height:22px;background:#e5e5e5'></div>
<div style='left:621px;top:73px;width:1px;height:22px;background:#ffffff'></div>
<div style='left:683px;top:73px;width:1px;height:22px;background:#e5e5e5'></div>
<div style='left:684px;top:73px;width:1px;height:22px;background:#ffffff'></div>
<div style='left:747px;top:73px;width:1px;height:22px;background:#e5e5e5'></div>
<div style='left:748px;top:73px;width:1px;height:22px;background:#ffffff'></div>
<div style='left:811px;top:73px;width:1px;height:22px;background:#e5e5e5'></div>
<div style='left:812px;top:73px;width:1px;height:22px;background:#ffffff'></div>
<div style='left:539px;top:201px;width:52px;height:22px;background:#fff;border:1px solid #7a7a7a;box-sizing:border-box'></div>
<div style='left:544px;top:206px;width:42px;height:12px;background:#004080;border:1px solid #000;box-sizing:border-box'></div>
<div style='left:539px;top:228px;width:52px;height:22px;background:#fff;border:1px solid #7a7a7a;box-sizing:border-box'></div>
<div style='left:544px;top:233px;width:42px;height:12px;background:#000;border:1px solid #000;box-sizing:border-box'></div>
<div style='left:599px;top:202px;width:25px;height:20px;border:1px solid #707070;border-radius:3px;box-sizing:border-box;box-shadow:inset 0 0 0 1px #fcfcfc;background:linear-gradient(#f2f2f2 0%,#ebebeb 48%,#dddddd 52%,#cfcfcf 100%)'></div>
<svg style='position:absolute;left:599px;top:202px' width='25' height='20' viewBox='0 0 25 20'><path d='M13 3 C18 3 21.5 5.5 21.5 9 C21.5 10.5 20 10.8 19 10.6 C17.5 10.4 17.2 11.8 18.2 13 C19.2 14.5 17 16.8 12.5 16.8 C7.5 16.8 4.5 14 4.5 10 C4.5 6 8 3 13 3 Z' fill='#ffffff' stroke='#b8c8d8' stroke-width='0.9'/><path d='M17.5 3.8 C20.5 5 21.5 7 21.5 9 C21.5 10.5 20 10.8 19 10.6 C17.5 10.4 17.2 11.8 18.2 13 C19.2 14.5 17.5 16.5 13 16.8' fill='none' stroke='#505050' stroke-width='1.1'/><ellipse cx='15.2' cy='9' rx='1.6' ry='1.1' fill='#555'/><ellipse cx='14' cy='5.4' rx='2.1' ry='1.2' fill='#f0c000'/><circle cx='10.3' cy='7.6' r='1.5' fill='#f06010'/><circle cx='8.3' cy='11.8' r='1.5' fill='#e00000'/><circle cx='13' cy='14.2' r='1.5' fill='#008000'/><ellipse cx='17.6' cy='12.6' rx='2' ry='1.4' fill='#0030c0'/></svg>
<div style='left:669px;top:202px;width:78px;height:20px;border:1px solid #707070;border-radius:3px;box-sizing:border-box;box-shadow:inset 0 0 0 1px #fcfcfc;background:linear-gradient(#f2f2f2 0%,#ebebeb 48%,#dddddd 52%,#cfcfcf 100%)'></div>
<div style='left:756px;top:202px;width:79px;height:20px;border:1px solid #707070;border-radius:3px;box-sizing:border-box;box-shadow:inset 0 0 0 1px #fcfcfc;background:linear-gradient(#f2f2f2 0%,#ebebeb 48%,#dddddd 52%,#cfcfcf 100%)'></div>
<div style='left:622px;top:279px;width:70px;height:20px;border:1px solid #3c8fd8;border-radius:3px;box-sizing:border-box;box-shadow:inset 0 0 0 1px #5fd3f7;background:linear-gradient(#eaf6fd 0%,#eaf6fd 0%,#f2f2f2 8%,#ebebeb 48%,#dddddd 52%,#cfcfcf 100%)'></div>
<div style='left:700px;top:279px;width:70px;height:20px;border:1px solid #707070;border-radius:3px;box-sizing:border-box;box-shadow:inset 0 0 0 1px #fcfcfc;background:linear-gradient(#f2f2f2 0%,#ebebeb 48%,#dddddd 52%,#cfcfcf 100%)'></div>
<div style='left:778px;top:279px;width:70px;height:20px;border:1px solid #adb2b5;border-radius:3px;background:#f4f4f4;box-sizing:border-box'></div>
<div style='left:259px;top:549px;width:51px;height:23px;background:#fff;border:1px solid #7a7a7a;box-sizing:border-box;border-right:none'></div>
<div style='left:264px;top:554px;width:43px;height:13px;background:#004080;border:1px solid #000;box-sizing:border-box'></div>
<div style='left:259px;top:577px;width:51px;height:22px;background:#fff;border:1px solid #7a7a7a;box-sizing:border-box;border-right:none'></div>
<div style='left:264px;top:582px;width:43px;height:13px;background:#004080;border:1px solid #000;box-sizing:border-box'></div>
<div style='left:421px;top:549px;width:51px;height:23px;background:#fff;border:1px solid #7a7a7a;box-sizing:border-box;border-right:none'></div>
<div style='left:426px;top:554px;width:43px;height:13px;background:#004080;border:1px solid #000;box-sizing:border-box'></div>
<div style='left:421px;top:577px;width:51px;height:22px;background:#fff;border:1px solid #7a7a7a;box-sizing:border-box;border-right:none'></div>
<div style='left:426px;top:582px;width:43px;height:13px;background:#404040;border:1px solid #000;box-sizing:border-box'></div>
<div style='left:582px;top:549px;width:52px;height:23px;background:#fff;border:1px solid #7a7a7a;box-sizing:border-box'></div>
<div style='left:587px;top:554px;width:43px;height:13px;background:#004080;border:1px solid #000;box-sizing:border-box'></div>
<div style='left:582px;top:577px;width:52px;height:22px;background:#fff;border:1px solid #7a7a7a;box-sizing:border-box'></div>
<div style='left:587px;top:582px;width:43px;height:13px;background:#000000;border:1px solid #000;box-sizing:border-box'></div>
<div style='left:259px;top:627px;width:51px;height:23px;background:#fff;border:1px solid #7a7a7a;box-sizing:border-box;border-right:none'></div>
<div style='left:264px;top:632px;width:43px;height:13px;background:#80ffff;border:1px solid #000;box-sizing:border-box'></div>
<div style='left:259px;top:655px;width:51px;height:22px;background:#fff;border:1px solid #7a7a7a;box-sizing:border-box;border-right:none'></div>
<div style='left:264px;top:660px;width:43px;height:13px;background:#80ffff;border:1px solid #000;box-sizing:border-box'></div>
<div style='left:421px;top:627px;width:51px;height:23px;background:#fff;border:1px solid #7a7a7a;box-sizing:border-box;border-right:none'></div>
<div style='left:426px;top:632px;width:43px;height:13px;background:#80ffff;border:1px solid #000;box-sizing:border-box'></div>
<div style='left:421px;top:655px;width:51px;height:22px;background:#fff;border:1px solid #7a7a7a;box-sizing:border-box;border-right:none'></div>
<div style='left:426px;top:660px;width:43px;height:13px;background:#d4d4d4;border:1px solid #000;box-sizing:border-box'></div>
<div style='left:582px;top:627px;width:52px;height:23px;background:#fff;border:1px solid #7a7a7a;box-sizing:border-box'></div>
<div style='left:587px;top:632px;width:43px;height:13px;background:#80ffff;border:1px solid #000;box-sizing:border-box'></div>
<div style='left:582px;top:655px;width:52px;height:22px;background:#fff;border:1px solid #7a7a7a;box-sizing:border-box'></div>
<div style='left:587px;top:660px;width:43px;height:13px;background:#ffffff;border:1px solid #000;box-sizing:border-box'></div>
<span class='t' style='left:14.30px;top:14.00px;color:#000;letter-spacing:-0.428px'>Basic colors:</span>
<span class='t' style='left:13.30px;top:173.00px;color:#000;letter-spacing:-0.504px'>Custom colors:</span>
<span class='t' style='left:58.30px;top:247.00px;color:#838383;letter-spacing:-0.465px'>Define Custom Colors &gt;&gt;</span>
<span class='t' style='left:37.30px;top:272.00px;color:#000;letter-spacing:0.447px'>OK</span>
<span class='t' style='left:98.05px;top:272.00px;color:#000;letter-spacing:-0.158px'>Cancel</span>
<span class='t' style='left:233.30px;top:243.00px;color:#000;letter-spacing:-0.619px'>Color|Solid</span>
<span class='t' style='left:322.80px;top:204.00px;color:#000;letter-spacing:0.000px'>140</span>
<span class='t' style='left:294.84px;top:204.00px;color:#000;letter-spacing:-0.362px'>Hue:</span>
<span class='t' style='left:322.80px;top:226.00px;color:#000;letter-spacing:0.000px'>240</span>
<span class='t' style='left:298.38px;top:226.00px;color:#000;letter-spacing:-0.320px'>Sat:</span>
<span class='t' style='left:322.80px;top:248.00px;color:#000;letter-spacing:0.000px'>60</span>
<span class='t' style='left:294.53px;top:248.00px;color:#000;letter-spacing:-0.667px'>Lum:</span>
<span class='t' style='left:399.80px;top:204.00px;color:#000;letter-spacing:0.000px'>0</span>
<span class='t' style='left:371.96px;top:204.00px;color:#000;letter-spacing:-0.237px'>Red:</span>
<span class='t' style='left:399.80px;top:226.00px;color:#000;letter-spacing:0.000px'>64</span>
<span class='t' style='left:363.64px;top:226.00px;color:#000;letter-spacing:-0.557px'>Green:</span>
<span class='t' style='left:399.80px;top:248.00px;color:#000;letter-spacing:0.000px'>128</span>
<span class='t' style='left:370.84px;top:248.00px;color:#000;letter-spacing:-0.356px'>Blue:</span>
<span class='t' style='left:281.55px;top:272.00px;color:#000;letter-spacing:-0.515px'>Add to Custom Colors</span>
<span class='t' style='left:487.80px;top:19.00px;color:#000;letter-spacing:-0.421px'>Scan Settings</span>
<span class='t' style='left:562.80px;top:19.00px;color:#000;letter-spacing:-0.454px'>Page Settings</span>
<span class='t' style='left:637.30px;top:19.00px;color:#000;letter-spacing:-0.320px'>Advanced Settings</span>
<span class='t' style='left:736.30px;top:17.00px;color:#000;letter-spacing:-0.308px'>Redaction Settings</span>
<span class='t' style='left:506.30px;top:47.00px;color:#000;letter-spacing:-0.403px'>Enable Redaction</span>
<span class='t' style='left:498.30px;top:78.00px;color:#000;letter-spacing:-0.308px'>Side</span>
<span class='t' style='left:562.30px;top:78.00px;color:#000;letter-spacing:0.000px'>X</span>
<span class='t' style='left:625.30px;top:78.00px;color:#000;letter-spacing:0.000px'>Y</span>
<span class='t' style='left:688.30px;top:78.00px;color:#000;letter-spacing:0.135px'>Width</span>
<span class='t' style='left:753.30px;top:78.00px;color:#000;letter-spacing:0.001px'>Height</span>
<span class='t' style='left:498.30px;top:98.00px;color:#000;letter-spacing:-0.335px'>Both</span>
<span class='t' style='left:562.30px;top:98.00px;color:#000;letter-spacing:-0.155px'>4.00</span>
<span class='t' style='left:625.30px;top:98.00px;color:#000;letter-spacing:-0.155px'>2.00</span>
<span class='t' style='left:689.30px;top:98.00px;color:#000;letter-spacing:-0.155px'>3.00</span>
<span class='t' style='left:753.30px;top:98.00px;color:#000;letter-spacing:-0.155px'>1.00</span>
<span class='t' style='left:498.30px;top:114.00px;color:#000;letter-spacing:0.023px'>Front</span>
<span class='t' style='left:562.30px;top:114.00px;color:#000;letter-spacing:-0.155px'>8.00</span>
<span class='t' style='left:625.30px;top:114.00px;color:#000;letter-spacing:-0.155px'>4.00</span>
<span class='t' style='left:689.30px;top:114.00px;color:#000;letter-spacing:-0.155px'>2.00</span>
<span class='t' style='left:753.30px;top:114.00px;color:#000;letter-spacing:-0.155px'>2.00</span>
<span class='t' style='left:493.30px;top:206.00px;color:#000;letter-spacing:-0.257px'>Color:</span>
<span class='t' style='left:493.30px;top:232.00px;color:#000;letter-spacing:-0.298px'>Preview:</span>
<span class='t' style='left:697.80px;top:206.00px;color:#000;letter-spacing:0.074px'>Add</span>
<span class='t' style='left:775.30px;top:206.00px;color:#000;letter-spacing:-0.611px'>Remove</span>
<span class='t' style='left:670.30px;top:231.00px;color:#000;letter-spacing:-0.552px'>Paper Size:</span>
<span class='t' style='left:727.80px;top:231.00px;color:#000;letter-spacing:-0.530px'>8.50</span>
<span class='t' style='left:750.80px;top:231.00px;color:#000;letter-spacing:0.000px'>x</span>
<span class='t' style='left:760.80px;top:231.00px;color:#000;letter-spacing:-0.184px'>11.00</span>
<span class='t' style='left:790.50px;top:231.00px;color:#000;letter-spacing:-0.499px'>inches</span>
<span class='t' style='left:649.05px;top:282.00px;color:#000;letter-spacing:-0.303px'>OK</span>
<span class='t' style='left:718.30px;top:282.00px;color:#000;letter-spacing:-0.242px'>Cancel</span>
<span class='t' style='left:799.80px;top:282.00px;color:#838383;letter-spacing:-0.346px'>Apply</span>
<span class='t' style='left:213.30px;top:554.00px;color:#000;letter-spacing:-0.041px'>Color:</span>
<span class='t' style='left:213.30px;top:582.00px;color:#000;letter-spacing:-0.198px'>Preview:</span>
<span class='t' style='left:375.30px;top:554.00px;color:#000;letter-spacing:-0.041px'>Color:</span>
<span class='t' style='left:375.30px;top:582.00px;color:#000;letter-spacing:-0.198px'>Preview:</span>
<span class='t' style='left:536.30px;top:554.00px;color:#000;letter-spacing:-0.041px'>Color:</span>
<span class='t' style='left:536.30px;top:582.00px;color:#000;letter-spacing:-0.198px'>Preview:</span>
<span class='t' style='left:213.30px;top:632.00px;color:#000;letter-spacing:-0.041px'>Color:</span>
<span class='t' style='left:213.30px;top:660.00px;color:#000;letter-spacing:-0.198px'>Preview:</span>
<span class='t' style='left:375.30px;top:632.00px;color:#000;letter-spacing:-0.041px'>Color:</span>
<span class='t' style='left:375.30px;top:660.00px;color:#000;letter-spacing:-0.198px'>Preview:</span>
<span class='t' style='left:536.30px;top:632.00px;color:#000;letter-spacing:-0.041px'>Color:</span>
<span class='t' style='left:536.30px;top:660.00px;color:#000;letter-spacing:-0.198px'>Preview:</span>
<div style='left:528px;top:540px;width:9px;height:137px;background:#fff'></div>
</body></html>
